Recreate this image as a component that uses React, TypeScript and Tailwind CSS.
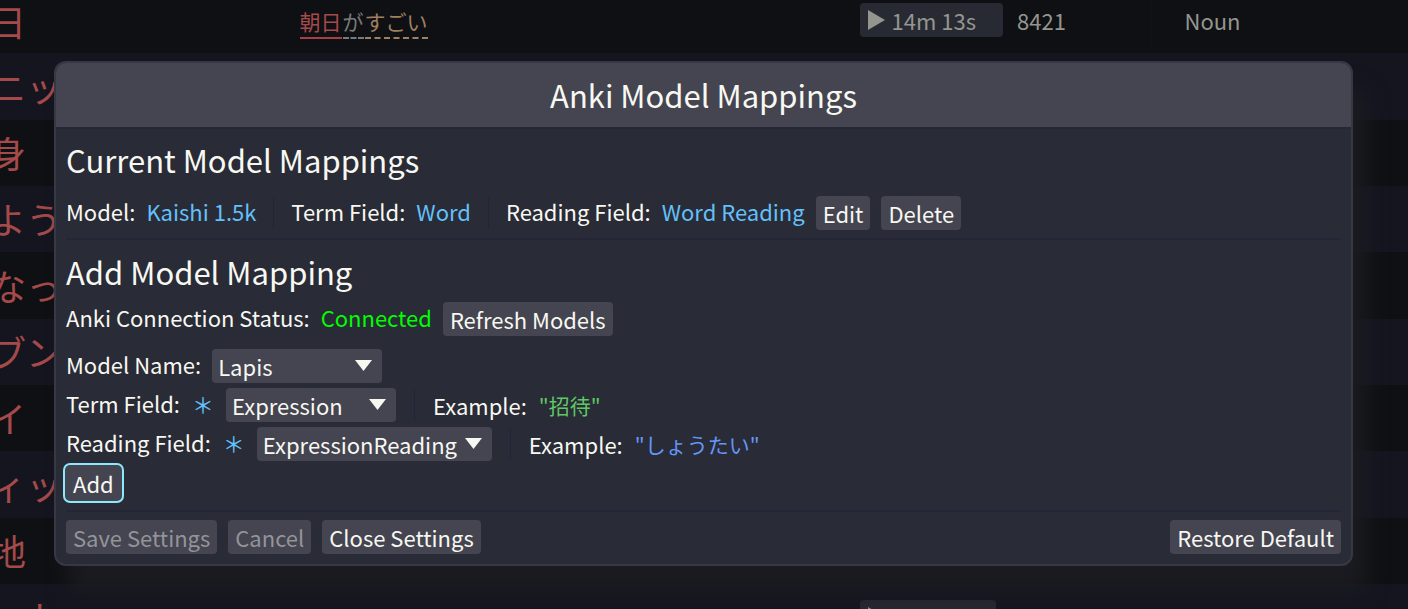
import React, { useState } from "react";
import type { ButtonHTMLAttributes, ReactNode } from "react";

type TermRow = { term: string; time?: string };

const rows: TermRow[] = [
  { term: "ニッ" },
  { term: "身" },
  { term: "よう" },
  { term: "なっ" },
  { term: "ブン" },
  { term: "イ" },
  { term: "ィッ" },
  { term: "地" },
  { term: "ート", time: "14m 8s" },
];

function PlayButton({ time, width }: { time: string; width: string }) {
  return (
    <button
      type="button"
      className={`flex h-[34px] items-center gap-[7px] rounded-sm bg-[#282a33] pl-2 text-[#94958f] ${width}`}
    >
      <svg aria-hidden="true" viewBox="0 0 17 20" className="h-5 w-[17px] fill-current">
        <path d="M0 0L17 10L0 20Z" />
      </svg>
      <span>{time}</span>
    </button>
  );
}

function TermTable() {
  return (
    <table className="w-full table-fixed border-collapse text-left text-[22px] leading-[30px] text-[#94958f]">
      <colgroup>
        <col className="w-[293px]" />
        <col className="w-[560px]" />
        <col className="w-[157px]" />
        <col className="w-[141px]" />
        <col />
      </colgroup>
      <tbody>
        <tr className="h-[53px] bg-[#0f1013]">
          <td className="p-0 text-[36px] leading-[40px] text-[#a54a4a]">
            <div className="-ml-[10px] -mt-3">日</div>
          </td>
          <td className="border-l border-[#111215] py-0 pl-[6px]">
            <div className="-mt-2 flex h-8 items-start gap-px text-[21px] leading-[28px]">
              <span className="border-b-2 border-[#a54046] pb-[2px] text-[#a54a4a]">朝日</span>
              <span className="border-b-2 border-dashed border-[#777b7b] pb-[2px] text-[#777b7b]">が</span>
              <span className="border-b-2 border-dashed border-[#a08060] pb-[2px] text-[#a08060]">すごい</span>
            </div>
          </td>
          <td className="border-l border-[#111215] py-0 pl-[6px]">
            <div className="-mt-[14px]">
              <PlayButton time="14m 13s" width="w-[143px]" />
            </div>
          </td>
          <td className="py-0 pl-[7px]">
            <div className="-mt-[14px]">8421</div>
          </td>
          <td className="border-l border-[#111215] py-0 pl-[33px]">
            <div className="-mt-[14px]">Noun</div>
          </td>
        </tr>
        {rows.map((row) => (
          <tr key={row.term} className="h-[66px] odd:bg-[#0f1013] even:bg-[#151520] nth-[3n+2]:h-[67px]">
            <td className="whitespace-nowrap p-0 text-[36px] leading-[40px] text-[#a54a4a]">
              <div className="-ml-[10px] -mt-[2px]">{row.term}</div>
            </td>
            <td className="p-0" />
            <td className="py-0 pl-[7px]">
              {row.time && <PlayButton time={row.time} width="w-[136px]" />}
            </td>
            <td className="p-0" />
            <td className="p-0" />
          </tr>
        ))}
      </tbody>
    </table>
  );
}

function Button({ className = "", ...props }: ButtonHTMLAttributes<HTMLButtonElement>) {
  return (
    <button
      type="button"
      className={`h-[34px] shrink-0 rounded-sm bg-[#444550] px-[7px] pb-px whitespace-nowrap outline-none disabled:text-[#93949a] ${className}`}
      {...props}
    />
  );
}

function Divider() {
  return <span aria-hidden="true" className="mx-[6px] h-8 w-px bg-[#222439]" />;
}

function Rule() {
  return <hr className="border-t-2 border-[#242638]" />;
}

function Value({ children }: { children: ReactNode }) {
  return <span className="pb-1 text-[#63c0fb]">{children}</span>;
}

function Picker({ id, options, width }: { id: string; options: string[]; width: string }) {
  const [value, setValue] = useState(options[0]);
  return (
    <span className={`relative ${width}`}>
      <select
        id={id}
        value={value}
        onChange={(e) => setValue(e.target.value)}
        className="h-[34px] w-full appearance-none rounded-sm bg-[#444550] pl-[6px] pr-8 outline-none"
      >
        {options.map((o) => (
          <option key={o}>{o}</option>
        ))}
      </select>
      <svg
        aria-hidden="true"
        viewBox="0 0 17 11"
        className="pointer-events-none absolute right-[10px] top-[11px] h-[11px] w-[17px] fill-current"
      >
        <path d="M0 0H17L8.5 11Z" />
      </svg>
    </span>
  );
}

export default function App() {
  return (
    <div className="relative h-screen overflow-hidden bg-[#151520] font-['Noto_Sans_CJK_JP',sans-serif]">
      <TermTable />
      <section
        role="dialog"
        aria-labelledby="title"
        className="absolute left-[54px] right-[55px] top-[61px] rounded-xl border-2 border-[#363844] bg-[#292b36] text-[22px] leading-[30px] text-[#f8f8f2] shadow-[14px_28px_21px_#1b1b21]"
      >
        <h1
          id="title"
          className="rounded-t-[10px] border-b-2 border-[#25273a] bg-[#444550] pb-[9px] pt-2 text-center text-[31px] leading-[47px]"
        >
          Anki Model Mappings
        </h1>
        <div className="px-[10px] pb-[10px] pt-[6px]">
          <h2 className="text-[31px] leading-[50px]">Current Model Mappings</h2>
          <div className="mb-2 mt-[11px] flex items-center gap-[11px]">
            <span className="pb-1">Model:</span>
            <Value>Kaishi 1.5k</Value>
            <Divider />
            <span className="pb-1">Term Field:</span>
            <Value>Word</Value>
            <Divider />
            <span className="pb-1">Reading Field:</span>
            <Value>Word Reading</Value>
            <Button>Edit</Button>
            <Button>Delete</Button>
          </div>
          <Rule />
          <h2 className="mt-[7px] text-[31px] leading-[50px]">Add Model Mapping</h2>
          <div className="mt-[5px] flex items-center gap-[11px]">
            <span className="pb-1">Anki Connection Status:</span>
            <span className="pb-1 text-[#00ff00]">Connected</span>
            <Button>Refresh Models</Button>
          </div>
          <div className="mt-[13px] flex flex-col gap-[5px]">
            <div className="flex items-center gap-[11px]">
              <label htmlFor="model" className="pb-1">
                Model Name:
              </label>
              <Picker id="model" options={["Lapis", "Kaishi 1.5k"]} width="w-[170px]" />
            </div>
            <div className="flex items-center gap-3">
              <label htmlFor="term" className="flex gap-3 pb-1">
                Term Field: <span className="text-[#63c0fb]">＊</span>
              </label>
              <Picker id="term" options={["Expression", "Word"]} width="w-[170px]" />
              <Divider />
              <span>Example:</span>
              <span className="text-[21px] text-[#5fc764]">"招待"</span>
            </div>
            <div className="flex items-center gap-3">
              <label htmlFor="reading" className="flex gap-3 pb-1">
                Reading Field: <span className="text-[#63c0fb]">＊</span>
              </label>
              <Picker id="reading" options={["ExpressionReading", "Word Reading"]} width="w-[235px]" />
              <Divider />
              <span>Example:</span>
              <span className="text-[21px] text-[#6496fa]">"しょうたい"</span>
            </div>
            <div className="flex">
              <Button className="ring-2 ring-[#8be9fd] ring-offset-1 ring-offset-[#444550]">Add</Button>
            </div>
          </div>
          <div className="mb-2 mt-[10px]">
            <Rule />
          </div>
          <div className="flex items-center gap-[11px]">
            <Button disabled>Save Settings</Button>
            <Button disabled>Cancel</Button>
            <Button>Close Settings</Button>
            <Button className="ml-auto">Restore Default</Button>
          </div>
        </div>
      </section>
    </div>
  );
}
